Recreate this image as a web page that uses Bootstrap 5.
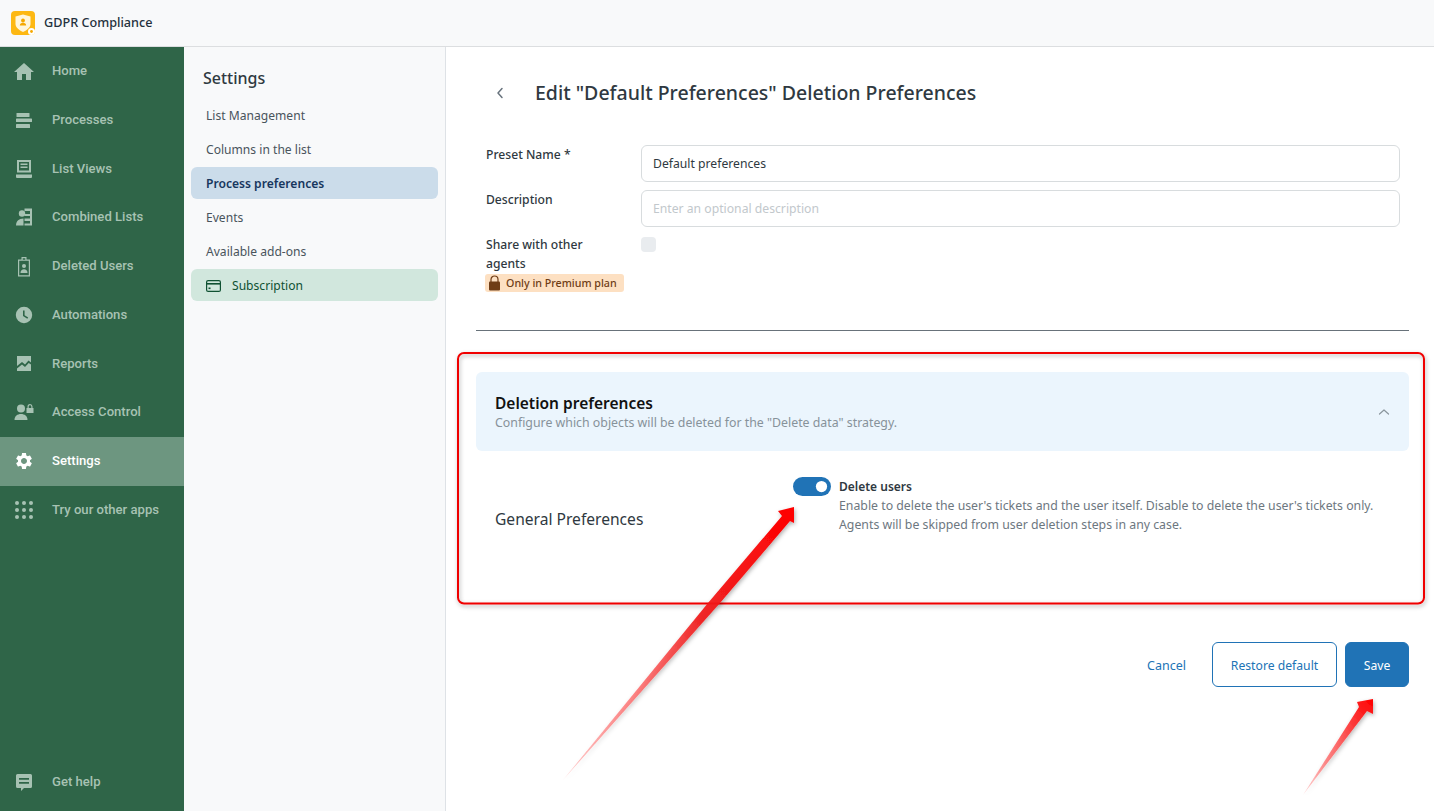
<!DOCTYPE html>
<html lang="en">
<head>
<meta charset="utf-8">
<title>GDPR Compliance</title>
<link href="https://cdn.jsdelivr.net/npm/bootstrap@5.3.0/dist/css/bootstrap.min.css" rel="stylesheet">
<style>
html,body{height:100%;}
body{font-family:"Noto Sans","Liberation Sans",sans-serif;font-size:13px;color:#2f3941;overflow:hidden;background:#fff;}
.shell{height:811px;position:relative;}
.topbar{height:47px;background:#f8f9fa;border-bottom:1px solid #dcdee0;padding-left:11px;gap:9px;}
.app-title{font-size:12.65px;font-weight:500;color:#24313d;padding-bottom:2px;}
.body-row{height:764px;}
.side{width:184px;background:#2f6548;font-family:Roboto,"Liberation Sans",sans-serif;padding-bottom:4px;}
.side-link{height:48.75px;color:#a7c2b3;font-size:13.1px;font-weight:500;text-decoration:none;padding:0 0 1px 12px;gap:16px;}
.side-link svg{width:24px;height:24px;fill:#a7c2b3;flex:none;}
.side-link.on{background:#6d9680;color:#fff;}
.side-link.on svg{fill:#fff;}
.subnav{width:262px;background:#f8f9fa;border-right:1px solid #dee2e6;padding:0 7px;}
.subnav-title{font-size:16px;font-weight:500;color:#2f3941;padding:20px 0 0 12px;height:52px;line-height:22px;}
.sub-link{height:32px;margin-bottom:2px;padding:2px 0 0 15px;border-radius:6px;color:#49545c;text-decoration:none;font-size:12.1px;gap:11px;}
.sub-link.cur{background:#cbdcea;color:#17375e;font-weight:600;}
.sub-link.plan{background:#d1e7dd;color:#0f5132;}
.main-pane{padding:0 25px 0 30px;}
.head-row{height:92px;padding-left:19px;}
.head-row h1{font-size:19.5px;font-weight:500;margin:0 0 0 30px;color:#2f3941;}
.form-zone{padding:6px 9px 0 10px;}
.field-row{margin-bottom:8px;}
.field-label{width:155px;flex:none;font-weight:500;font-size:12.15px;line-height:19px;padding-top:0;color:#2f3941;}
.field-row .form-control{height:37px;font-size:12.2px;border-color:#d8dcde;border-radius:6px;padding:0 11px;color:#2f3941;}
.field-row .form-control::placeholder{color:#c2c8cc;}
.share-row{height:80px;margin-top:0;}
.share-box{width:15px;height:15px;background:#e9ecef;border-radius:4px;margin-top:2px;}
.plan-tag{display:inline-flex;align-items:center;gap:5px;height:18px;width:139px;margin-left:-1px;margin-top:1px;background:#fde0c2;color:#6f3d16;border-radius:3px;font-size:10.7px;font-weight:500;padding-left:3px;}
.split{border-top:1px solid #68727a;opacity:1;margin:15px 0 41px;}
.pref-head{height:79px;background:#ebf5fd;border-radius:6px;padding:0 19px;}
.pref-head h2{font-size:15.5px;font-weight:600;margin:0;color:#111;line-height:21px;}
.pref-head p{margin:0;color:#87929a;font-size:12.35px;line-height:17px;}
.pref-body{height:191px;padding:26px 19px 0;}
.pref-name{width:298px;flex:none;font-size:15.6px;color:#2f3941;padding-top:31px;line-height:22px;}
.form-switch .tog,.form-switch .tog:checked{width:38px;height:19px;margin:0 8px 0 0;background-color:#2073b6;border:0;float:none;background-size:15px 15px;background-position:right 2px center;}
.tog-wrap{padding:0;min-height:0;margin:0;}
.tog-title{font-weight:600;font-size:12px;line-height:19px;color:#2f3941;}
.tog-desc{font-size:12.3px;line-height:19px;color:#6d777f;}
.action-row{gap:8px;}
.link-cancel{color:#2073b6;font-size:12.5px;text-decoration:none;margin-right:18px;padding-top:4px;}
.btn-keep,.btn-store{height:45px;font-size:12.2px;border-radius:6px;}
.btn-keep.p-0,.btn-store.p-0{padding-top:3px !important;}
.btn-keep{width:125px;border:1px solid #2073b6;color:#2073b6;background:#fff;}
.btn-store{width:64px;background:#2073b6;border:1px solid #2073b6;color:#fff;}
.markup{position:absolute;left:0;top:0;width:1434px;height:811px;pointer-events:none;}
</style>
</head>
<body>
<div class="shell">
  <header class="topbar d-flex align-items-center">
    <svg width="24" height="24" viewBox="0 0 24 24" aria-hidden="true">
      <rect width="24" height="24" rx="4" fill="#fdb813"/>
      <path d="M4.500 5.500 12 3.500l7.500 2v7.500c0 3.500-3.500 6-7.500 8-4-2-7.500-4.500-7.500-8z" fill="#fff6dc"/>
      <circle cx="12" cy="9.500" r="1.900" fill="#f5a800"/>
      <path d="M8.800 14.500c0-2 1.400-2.800 3.200-2.800s3.200.8 3.200 2.800z" fill="#f5a800"/>
      <circle cx="20.500" cy="20.500" r="3.500" fill="#fff"/><circle cx="20.500" cy="20.500" r="1.400" fill="#f5a800"/>
    </svg>
    <span class="app-title">GDPR Compliance</span>
  </header>
  <div class="body-row d-flex">
    <nav class="side d-flex flex-column">
      <a class="side-link d-flex align-items-center" href="#"><svg viewBox="0 0 24 24"><path d="M10 21v-6h4v6h5v-8h3L12 4 2 13h3v8z"/></svg>Home</a>
      <a class="side-link d-flex align-items-center" href="#"><svg viewBox="0 0 24 24"><rect x="4.500" y="5" width="13" height="4" rx=".6"/><rect x="4" y="10.500" width="16" height="3.500" rx=".6"/><rect x="4" y="16" width="14" height="4" rx=".6"/></svg>Processes</a>
      <a class="side-link d-flex align-items-center" href="#"><svg viewBox="0 0 24 24"><path d="M5 4h14v12.500H5zm2 2v8.500h10V6zm1.500 1.500h7V9h-7zm0 3h7V12h-7z" fill-rule="evenodd"/><path d="M4 18.500h16V21a1 1 0 0 1-1 1H5a1 1 0 0 1-1-1z"/></svg>List Views</a>
      <a class="side-link d-flex align-items-center" href="#"><svg viewBox="0 0 24 24"><circle cx="10" cy="8.500" r="3.200"/><path d="M4 20.500c0-4 2.500-7 7.500-7v7z"/><path d="M12.500 3.500H20v17h-7.500v-2H18v-2.500h-5.500v-2.500H18v-2.500h-5.500V9H18V6h-5.500z"/></svg>Combined Lists</a>
      <a class="side-link d-flex align-items-center" href="#"><svg viewBox="0 0 24 24"><path d="M9.500 3h5v2.500H18v17H6v-17h3.500zM7.200 6.700v14.600h9.600V6.700zm3.500-2.500v1.500h2.600V4.200z" fill-rule="evenodd"/><circle cx="12" cy="12" r="2"/><path d="M8.500 19c0-2.500 1.500-3.700 3.500-3.700s3.500 1.200 3.500 3.700z"/></svg>Deleted Users</a>
      <a class="side-link d-flex align-items-center" href="#"><svg viewBox="0 0 24 24"><path d="M12 3.800a8.200 8.200 0 1 0 0 16.400 8.200 8.200 0 0 0 0-16.400zm3.300 12L11 13V7.500h1.600v4.700l3.600 2.200z" fill-rule="evenodd"/></svg>Automations</a>
      <a class="side-link d-flex align-items-center" href="#"><svg viewBox="0 0 24 24"><path d="M5 5h14v6.500l-2.500-2-3.500 4-3-2.500L5 15zM5 17.500l5-4 3 2.500 3.700-4L19 13.500V20H5z"/></svg>Reports</a>
      <a class="side-link d-flex align-items-center" href="#"><svg viewBox="0 0 24 24"><circle cx="9" cy="8.500" r="4"/><path d="M2.500 20c0-4 3-6 6.500-6s6.500 2 6.500 6z"/><path d="M15.500 8v-1.500a2.500 2.500 0 0 1 5 0V8h1v5h-7V8zm1.200 0h2.600V6.500a1.300 1.300 0 0 0-2.600 0z" fill-rule="evenodd"/></svg>Access Control</a>
      <a class="side-link on d-flex align-items-center" href="#"><svg viewBox="-2.400 -2.400 28.800 28.800"><path d="M19.140 12.940c.04-.3.06-.61.06-.94 0-.32-.02-.64-.07-.94l2.030-1.580c.18-.14.23-.41.12-.61l-1.920-3.320c-.12-.22-.37-.29-.59-.22l-2.390.96c-.5-.38-1.030-.7-1.620-.94l-.36-2.540c-.04-.24-.24-.41-.48-.41h-3.840c-.24 0-.43.17-.47.41l-.36 2.540c-.59.24-1.130.57-1.620.94l-2.390-.96c-.22-.08-.47 0-.59.22L2.740 8.870c-.12.21-.08.47.12.61l2.030 1.580c-.05.3-.09.63-.09.94s.02.64.07.94l-2.030 1.580c-.18.14-.23.41-.12.61l1.920 3.320c.12.22.37.29.59.22l2.390-.96c.5.38 1.030.7 1.620.94l.36 2.540c.05.24.24.41.48.41h3.840c.24 0 .44-.17.47-.41l.36-2.540c.59-.24 1.130-.56 1.620-.94l2.390.96c.22.08.47 0 .59-.22l1.920-3.320c.12-.22.07-.47-.12-.61l-2.010-1.580zM12 15.600c-1.980 0-3.600-1.620-3.600-3.600s1.620-3.600 3.600-3.600 3.600 1.620 3.600 3.600-1.620 3.600-3.600 3.600z"/></svg>Settings</a>
      <a class="side-link d-flex align-items-center" href="#"><svg viewBox="0 0 24 24"><circle cx="5" cy="5" r="2"/><circle cx="12" cy="5" r="2"/><circle cx="19" cy="5" r="2"/><circle cx="5" cy="12" r="2"/><circle cx="12" cy="12" r="2"/><circle cx="19" cy="12" r="2"/><circle cx="5" cy="19" r="2"/><circle cx="12" cy="19" r="2"/><circle cx="19" cy="19" r="2"/></svg>Try our other apps</a>
      <a class="side-link d-flex align-items-center mt-auto" href="#"><svg viewBox="0 0 24 24"><path d="M5.500 4h13A1.500 1.500 0 0 1 20 5.500v11a1.500 1.500 0 0 1-1.500 1.500H12l-3 3v-3H5.500A1.500 1.500 0 0 1 4 16.500v-11A1.500 1.500 0 0 1 5.500 4zM7 8v1.800h10V8zm0 4v1.800h10V12z" fill-rule="evenodd"/></svg>Get help</a>
    </nav>
    <aside class="subnav">
      <div class="subnav-title">Settings</div>
      <a class="sub-link d-flex align-items-center" href="#">List Management</a>
      <a class="sub-link d-flex align-items-center" href="#">Columns in the list</a>
      <a class="sub-link cur d-flex align-items-center" href="#">Process preferences</a>
      <a class="sub-link d-flex align-items-center" href="#">Events</a>
      <a class="sub-link d-flex align-items-center" href="#">Available add-ons</a>
      <a class="sub-link plan d-flex align-items-center" href="#"><svg width="15" height="12" viewBox="0 0 15 12" fill="none" stroke="#0f5132" stroke-width="1.200"><rect x=".6" y=".6" width="13.800" height="10.800" rx="1.500"/><path d="M.6 3.800h13.800" stroke-width="1.600"/><rect x="2.500" y="7.500" width="2" height="1.600" fill="#0f5132" stroke="none"/></svg>Subscription</a>
    </aside>
    <main class="main-pane flex-grow-1">
      <div class="head-row d-flex align-items-center">
        <svg width="10" height="14" viewBox="0 0 10 14" fill="none" stroke="#68737d" stroke-width="1.500" stroke-linecap="round" stroke-linejoin="round"><path d="M7 2.500 3 7l4 4.500"/></svg>
        <h1>Edit "Default Preferences" Deletion Preferences</h1>
      </div>
      <form class="form-zone">
        <div class="field-row d-flex"><label class="field-label" for="pn">Preset Name *</label><input id="pn" class="form-control" value="Default preferences"></div>
        <div class="field-row d-flex"><label class="field-label" for="pd">Description</label><input id="pd" class="form-control" placeholder="Enter an optional description"></div>
        <div class="share-row d-flex">
          <div class="field-label">Share with other<br>agents<br>
            <span class="plan-tag"><svg width="13" height="16" viewBox="0 0 13 16"><path d="M3 7V4.500a3.500 3.500 0 0 1 7 0V7" fill="none" stroke="#6f3d16" stroke-width="1.200"/><rect x="1" y="6.500" width="11" height="9" rx="1" fill="#6f3d16"/></svg>Only in Premium plan</span>
          </div>
          <div class="share-box"></div>
        </div>
      </form>
      <hr class="split">
      <section>
        <div class="pref-head d-flex align-items-center justify-content-between">
          <div><h2>Deletion preferences</h2><p>Configure which objects will be deleted for the "Delete data" strategy.</p></div>
          <svg width="12" height="8" viewBox="0 0 12 8" fill="none" stroke="#8a959d" stroke-width="1.200" stroke-linecap="round" stroke-linejoin="round"><path d="M1.500 6 6 2l4.500 4"/></svg>
        </div>
        <div class="pref-body d-flex">
          <div class="pref-name">General Preferences</div>
          <div class="d-flex">
            <div class="form-check form-switch tog-wrap"><input class="form-check-input tog" type="checkbox" role="switch" checked aria-label="Delete users"></div>
            <div><div class="tog-title">Delete users</div><div class="tog-desc">Enable to delete the user's tickets and the user itself. Disable to delete the user's tickets only.<br>Agents will be skipped from user deletion steps in any case.</div></div>
          </div>
        </div>
      </section>
      <div class="action-row d-flex justify-content-end align-items-center">
        <a class="link-cancel" href="#">Cancel</a>
        <button type="button" class="btn btn-keep p-0">Restore default</button>
        <button type="button" class="btn btn-store p-0">Save</button>
      </div>
    </main>
  </div>
  <svg class="markup" viewBox="0 0 1434 811" aria-hidden="true">
    <defs>
      <linearGradient id="fadeA" gradientUnits="userSpaceOnUse" x1="563" y1="780" x2="794" y2="508"><stop offset="0" stop-color="#ff0000" stop-opacity=".15"/><stop offset=".3" stop-color="#f44" stop-opacity=".62"/><stop offset=".6" stop-color="#f01818" stop-opacity=".92"/><stop offset="1" stop-color="#ff0000"/></linearGradient>
      <linearGradient id="fadeB" gradientUnits="userSpaceOnUse" x1="1303" y1="795" x2="1373" y2="699"><stop offset="0" stop-color="#ff0000" stop-opacity=".12"/><stop offset=".45" stop-color="#f44" stop-opacity=".7"/><stop offset="1" stop-color="#ff0000"/></linearGradient>
      <filter id="soft" x="-10%" y="-10%" width="120%" height="120%"><feDropShadow dx="1" dy="2" stdDeviation="2" flood-color="#000" flood-opacity=".32"/></filter>
    </defs>
    <rect x="458" y="353" width="966" height="250.500" rx="6" fill="none" stroke="#f00000" stroke-width="2" filter="url(#soft)"/>
    <polygon points="563,780 708,603 782,516 778,511 794,507 794,523 790,521 720,603" fill="url(#fadeA)" filter="url(#soft)"/>
    <polygon points="1303,795 1359,707 1357,702 1373,699 1373,714 1367,711" fill="url(#fadeB)" filter="url(#soft)"/>
  </svg>
</div>
<script src="https://cdn.jsdelivr.net/npm/bootstrap@5.3.0/dist/js/bootstrap.bundle.min.js"></script>
</body>
</html>
